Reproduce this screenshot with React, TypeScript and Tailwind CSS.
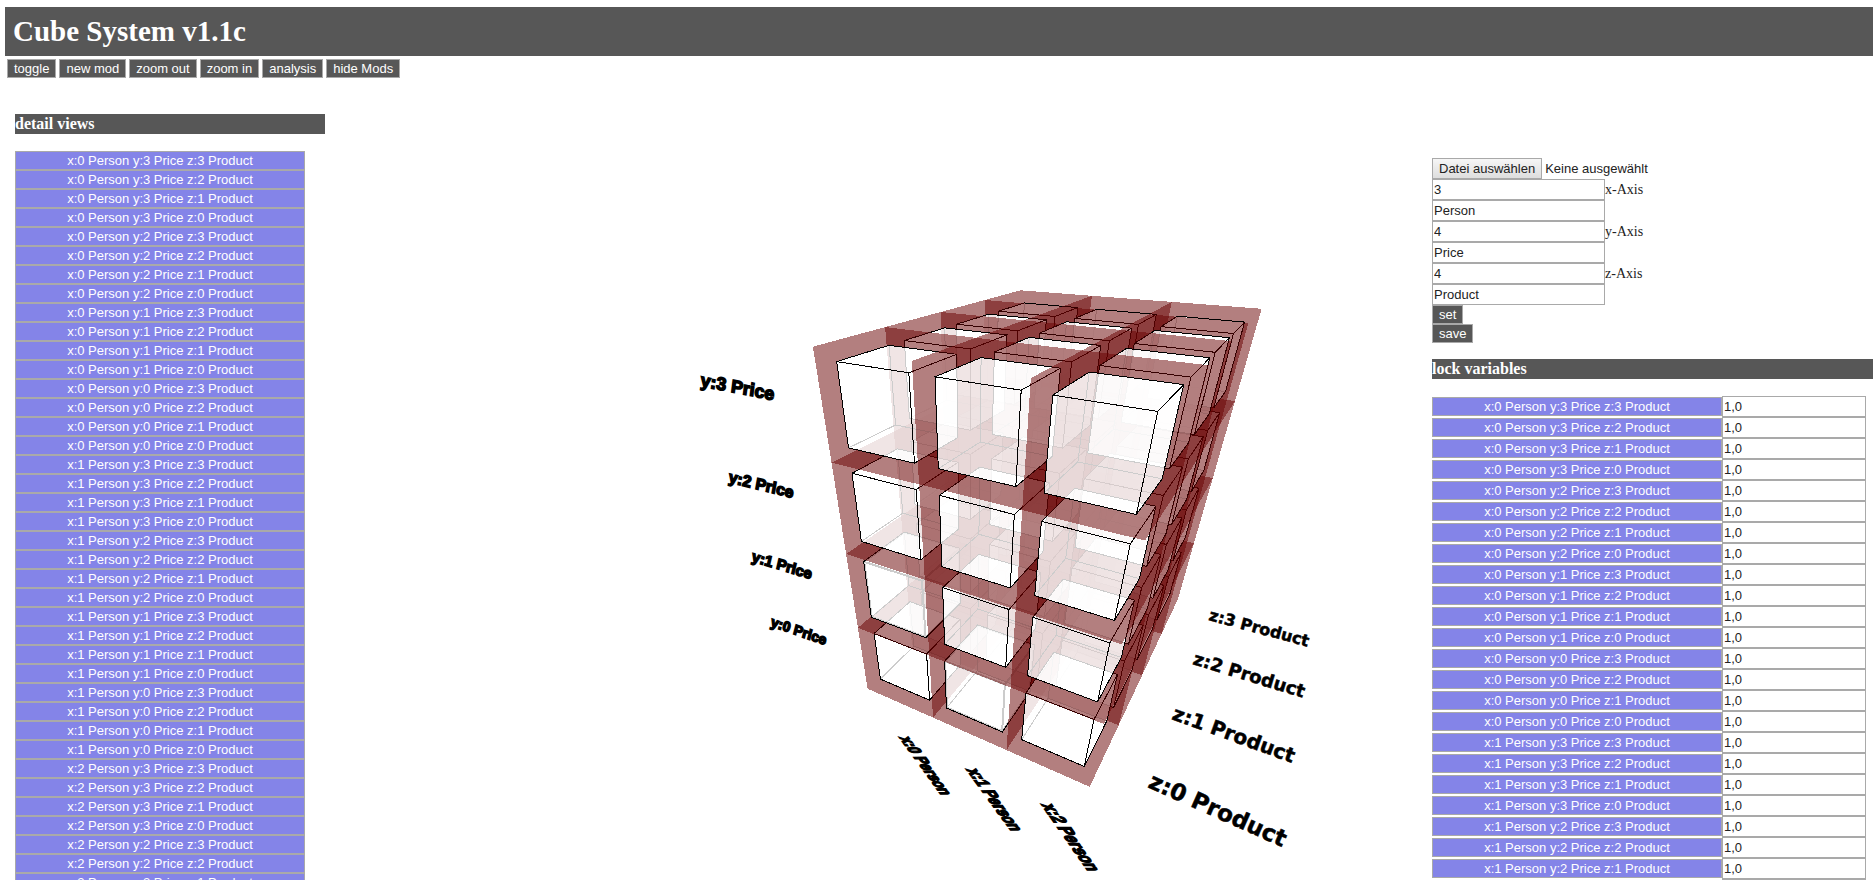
import type { ReactNode } from "react";

const range = (n: number) => Array.from({ length: n }, (_, i) => i);
const down = (n: number) => range(n).reverse();

const AXES = { x: { count: 3, name: "Person" }, y: { count: 4, name: "Price" }, z: { count: 4, name: "Product" } };

const CELLS = range(AXES.x.count).flatMap((x) =>
  down(AXES.y.count).flatMap((y) =>
    down(AXES.z.count).map((z) => `x:${x} ${AXES.x.name} y:${y} ${AXES.y.name} z:${z} ${AXES.z.name}`),
  ),
);

/* ---- 3D scene ---- */

type Vec3 = [number, number, number];

const CAMERA = [0.230301, 0.009019, 0.119129, -0.441332, 0.056448, -0.240246, -0.098583, 0.628891, -0.055047, -0.087515, 0.097306];

function project([x, y, z]: Vec3): string {
  const m = CAMERA;
  const w = m[8] * x + m[9] * y + m[10] * z + 1;
  const u = (m[0] * x + m[1] * y + m[2] * z + m[3]) / w;
  const v = (m[4] * x + m[5] * y + m[6] * z + m[7]) / w;
  return `${(1000 + 300 * u).toFixed(1)} ${(500 + 300 * v).toFixed(1)}`;
}

function box(x: number, y: number, z: number, inset: number) {
  const l = x + inset;
  const r = x + 1 - inset;
  const b = y + inset;
  const t = y + 1 - inset;
  const f = z + inset;
  const k = z + 1 - inset;
  const p = (a: number, c: number, d: number) => project([a, c, d]);
  const outline = `M${p(l, t, f)}L${p(l, t, k)}L${p(r, t, k)}L${p(r, b, k)}L${p(r, b, f)}L${p(l, b, f)}Z`;
  const corner = `M${p(l, t, f)}L${p(r, t, f)}L${p(r, b, f)}M${p(r, t, f)}L${p(r, t, k)}`;
  const hidden = `M${p(l, b, f)}L${p(l, b, k)}L${p(r, b, k)}M${p(l, b, k)}L${p(l, t, k)}`;
  return { outline, corner, hidden };
}

// Cells whose faces are drawn over their own edges.
const FADED = new Set(["0-1-0", "1-0-0"]);

function Cell({ x, y, z }: { x: number; y: number; z: number }) {
  const shell = box(x, y, z, 0);
  const core = box(x, y, z, 0.125);
  const front = core.outline + core.corner;
  const faded = FADED.has(`${x}-${y}-${z}`);
  return (
    <g>
      <path d={shell.outline + core.outline} fill="#670000" fillOpacity={0.5} fillRule="evenodd" />
      <path d={core.hidden} fill="none" stroke="#000" />
      {faded && <path d={front} fill="none" stroke="#000" strokeWidth={2} />}
      <path d={core.outline} fill="#fff" fillOpacity={0.8} />
      {!faded && <path d={front} fill="none" stroke="#000" />}
    </g>
  );
}

type LabelProps = { at: [number, number]; turn: number; skew: number; size: number; family: string; children: ReactNode };

function AxisLabel({ at, turn, skew, size, family, children }: LabelProps) {
  return (
    <text
      transform={`translate(${at[0]} ${at[1]}) rotate(${turn}) skewX(${skew})`}
      fontSize={size}
      fontFamily={family}
      fontWeight="bold"
      stroke="#000"
      strokeWidth={family === WIDE ? 0.5 : 1.5}
    >
      {children}
    </text>
  );
}

const NARROW = "'Liberation Sans', sans-serif";
const WIDE = "'DejaVu Sans', sans-serif";

function CubeScene() {
  return (
    <svg viewBox="325 114 1107 766" className="block w-full" role="img" aria-label="Cube">
      <g shapeRendering="crispEdges">
        {down(AXES.z.count).flatMap((z) =>
          range(AXES.y.count).flatMap((y) => range(AXES.x.count).map((x) => <Cell key={`${x}${y}${z}`} x={x} y={y} z={z} />)),
        )}
      </g>
      <AxisLabel at={[700, 386]} turn={11} skew={4} size={18} family={NARROW}>y:3 Price</AxisLabel>
      <AxisLabel at={[728, 482]} turn={14} skew={4} size={16} family={NARROW}>y:2 Price</AxisLabel>
      <AxisLabel at={[751, 561]} turn={17} skew={4} size={15} family={NARROW}>y:1 Price</AxisLabel>
      <AxisLabel at={[770, 626]} turn={19} skew={4} size={14} family={NARROW}>y:0 Price</AxisLabel>
      <AxisLabel at={[899, 737]} turn={54} skew={-35} size={14} family={NARROW}>x:0 Person</AxisLabel>
      <AxisLabel at={[966, 769]} turn={54} skew={-35} size={15} family={NARROW}>x:1 Person</AxisLabel>
      <AxisLabel at={[1041, 804]} turn={55} skew={-35} size={16} family={NARROW}>x:2 Person</AxisLabel>
      <AxisLabel at={[1208, 620]} turn={15} skew={0} size={16} family={WIDE}>z:3 Product</AxisLabel>
      <AxisLabel at={[1192, 664]} turn={17} skew={0} size={18} family={WIDE}>z:2 Product</AxisLabel>
      <AxisLabel at={[1171, 719]} turn={20} skew={0} size={20} family={WIDE}>z:1 Product</AxisLabel>
      <AxisLabel at={[1147, 787]} turn={24} skew={0} size={23} family={WIDE}>z:0 Product</AxisLabel>
    </svg>
  );
}

/* ---- controls ---- */

function DarkButton({ children }: { children: ReactNode }) {
  return <button className="h-[19px] border border-[#a9a9a9] bg-[#575757] px-1.5 leading-4 text-white">{children}</button>;
}

function CellButton({ children }: { children: ReactNode }) {
  return (
    <button className="block h-[19px] w-[290px] shrink-0 border border-[#a9a9a9] bg-[#8484e8] leading-4 text-white">{children}</button>
  );
}

function SectionTitle({ children }: { children: ReactNode }) {
  return <h2 className="h-5 bg-[#575757] font-['Liberation_Serif',serif] text-base leading-5 font-bold text-white">{children}</h2>;
}

const FIELD = "h-[21px] border border-[#a9a9a9] bg-white px-px text-[#222]";

function AxisFields({ axis, count, name }: { axis: string; count: number; name: string }) {
  return (
    <div className="flex flex-col items-start">
      <div className="flex items-center">
        <input id={`${axis}-count`} className={`${FIELD} w-[173px]`} defaultValue={count} />
        <label htmlFor={`${axis}-count`} className="font-['Liberation_Serif',serif] text-sm leading-5 text-[#222]">
          {axis}-Axis
        </label>
      </div>
      <input aria-label={`${axis}-Axis name`} className={`${FIELD} w-[173px]`} defaultValue={name} />
    </div>
  );
}

export default function App() {
  return (
    <div className="h-screen overflow-hidden bg-white pt-[7px] font-['Liberation_Sans',sans-serif] text-[13px]">
      <header className="ml-[5px]">
        <h1 className="flex h-[49px] items-center bg-[#575757] px-2 font-['Liberation_Serif',serif] text-[29px] font-bold text-white">
          Cube System v1.1c
        </h1>
        <nav className="flex gap-[3px] px-0.5 pt-[3px]">
          <DarkButton>toggle</DarkButton>
          <DarkButton>new mod</DarkButton>
          <DarkButton>zoom out</DarkButton>
          <DarkButton>zoom in</DarkButton>
          <DarkButton>analysis</DarkButton>
          <DarkButton>hide Mods</DarkButton>
        </nav>
      </header>

      <div className="flex items-start pt-9 pl-[15px]">
        <section className="w-[310px] shrink-0">
          <SectionTitle>detail views</SectionTitle>
          <div className="pt-[17px]">
            {CELLS.map((cell) => (
              <CellButton key={cell}>{cell}</CellButton>
            ))}
          </div>
        </section>

        <main className="min-w-0 flex-1">
          <CubeScene />
        </main>

        <aside className="w-[441px] shrink-0 pt-11">
          <form className="flex flex-col items-start">
            <div className="flex h-[21px] items-center gap-[3px] text-[#222]">
              <label className="h-[21px] cursor-pointer border border-[#a9a9a9] bg-linear-to-b from-[#f6f6f6] to-[#dedede] px-1.5 leading-[19px]">
                Datei auswählen
                <input type="file" className="sr-only" />
              </label>
              <span>Keine ausgewählt</span>
            </div>
            <AxisFields axis="x" {...AXES.x} />
            <AxisFields axis="y" {...AXES.y} />
            <AxisFields axis="z" {...AXES.z} />
            <DarkButton>set</DarkButton>
            <DarkButton>save</DarkButton>
          </form>
          <div className="pt-4">
            <SectionTitle>lock variables</SectionTitle>
          </div>
          <div className="pt-[17px]">
            {CELLS.map((cell) => (
              <div key={cell} className="flex items-center">
                <CellButton>{cell}</CellButton>
                <input aria-label={cell} className={`${FIELD} w-36`} defaultValue="1,0" />
              </div>
            ))}
          </div>
        </aside>
      </div>
    </div>
  );
}
